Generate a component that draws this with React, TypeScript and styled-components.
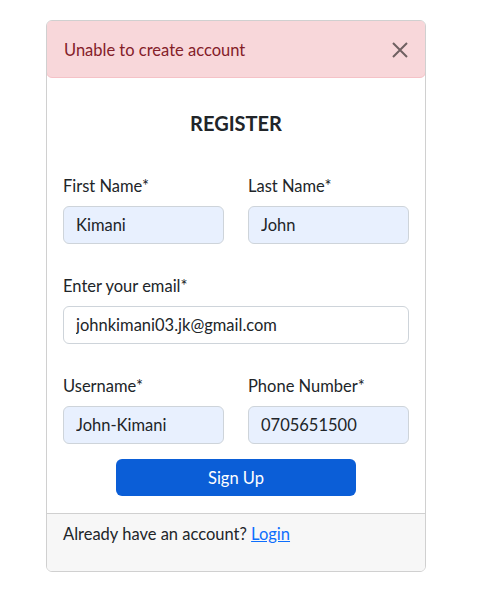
import React from "react";
import styled, { createGlobalStyle } from "styled-components";

const Global = createGlobalStyle`
  body { margin: 0; background: #fff; font-family: Lato, "Noto Sans", sans-serif; color: #212529; }
  * { box-sizing: border-box; }
`;

const Page = styled.div`
  padding: 20px 0 0 46px;
`;

const Card = styled.div`
  width: 380px;
  border: 1px solid #d0d0d0;
  border-radius: 6px;
  overflow: hidden;
`;

const Alert = styled.div`
  height: 58px;
  background: #f8d7da;
  border: 1px solid #f5c2c7;
  border-radius: 6px;
  margin: -1px -1px 0 -1px;
  display: flex;
  align-items: center;
  justify-content: space-between;
  padding: 1px 16px 0 17px;
  color: #842029;
  font-size: 16.5px;
`;

const Close = styled.button`
  border: 0;
  background: transparent;
  padding: 0;
  width: 18px;
  height: 18px;
  display: flex;
  align-items: center;
  justify-content: center;
  opacity: 0.55;
  cursor: pointer;
`;

const Body = styled.div`
  padding: 30px 16px 17px 16px;
`;

const Title = styled.h3`
  margin: 0 0 36px 0;
  text-align: center;
  font-size: 20px;
  font-weight: 700;
  line-height: 30px;
  color: #212529;
`;

const Row = styled.div<{ $cols: number; $last?: boolean }>`
  display: grid;
  grid-template-columns: repeat(${(p) => p.$cols}, 1fr);
  column-gap: 24px;
  margin-bottom: ${(p) => (p.$last ? "15px" : "30px")};
`;

const Field = styled.div`
  display: flex;
  flex-direction: column;
`;

const Label = styled.label`
  font-size: 16.5px;
  line-height: 24px;
  margin-bottom: 8px;
  color: #212529;
`;

const Input = styled.input<{ $filled?: boolean }>`
  height: 38px;
  width: 100%;
  border: 1px solid #ced4da;
  border-radius: 6px;
  padding: 0 12px;
  font-family: inherit;
  font-size: 16.5px;
  color: #212529;
  background: ${(p) => (p.$filled ? "#e8f0fe" : "#fff")};
  outline: none;
`;

const ButtonRow = styled.div`
  display: flex;
  justify-content: center;
`;

const Button = styled.button`
  width: 240px;
  height: 37px;
  border: 0;
  border-radius: 6px;
  background: #0b5ed7;
  color: #fff;
  font-family: inherit;
  font-size: 16.5px;
  cursor: pointer;
`;

const Footer = styled.div`
  background: #f7f7f7;
  border-top: 1px solid #d0d0d0;
  padding: 8px 16px 25px 16px;
  font-size: 16.5px;
  line-height: 24px;
`;

const Link = styled.a`
  color: #0d6efd;
  text-decoration: underline;
`;

export default function App() {
  return (
    <>
      <Global />
      <Page>
        <Card>
          <Alert>
            <span>Unable to create account</span>
            <Close aria-label="Close">
              <svg width="16" height="16" viewBox="0 0 16 16">
                <path d="M1 1L15 15M15 1L1 15" stroke="#000" strokeWidth="2" />
              </svg>
            </Close>
          </Alert>
          <Body>
            <Title>REGISTER</Title>
            <Row $cols={2}>
              <Field>
                <Label>First Name*</Label>
                <Input $filled defaultValue="Kimani" />
              </Field>
              <Field>
                <Label>Last Name*</Label>
                <Input $filled defaultValue="John" />
              </Field>
            </Row>
            <Row $cols={1}>
              <Field>
                <Label>Enter your email*</Label>
                <Input defaultValue="johnkimani03.jk@gmail.com" />
              </Field>
            </Row>
            <Row $cols={2} $last>
              <Field>
                <Label>Username*</Label>
                <Input $filled defaultValue="John-Kimani" />
              </Field>
              <Field>
                <Label>Phone Number*</Label>
                <Input $filled defaultValue="0705651500" />
              </Field>
            </Row>
            <ButtonRow>
              <Button>Sign Up</Button>
            </ButtonRow>
          </Body>
          <Footer>
            Already have an account? <Link href="#">Login</Link>
          </Footer>
        </Card>
      </Page>
    </>
  );
}
